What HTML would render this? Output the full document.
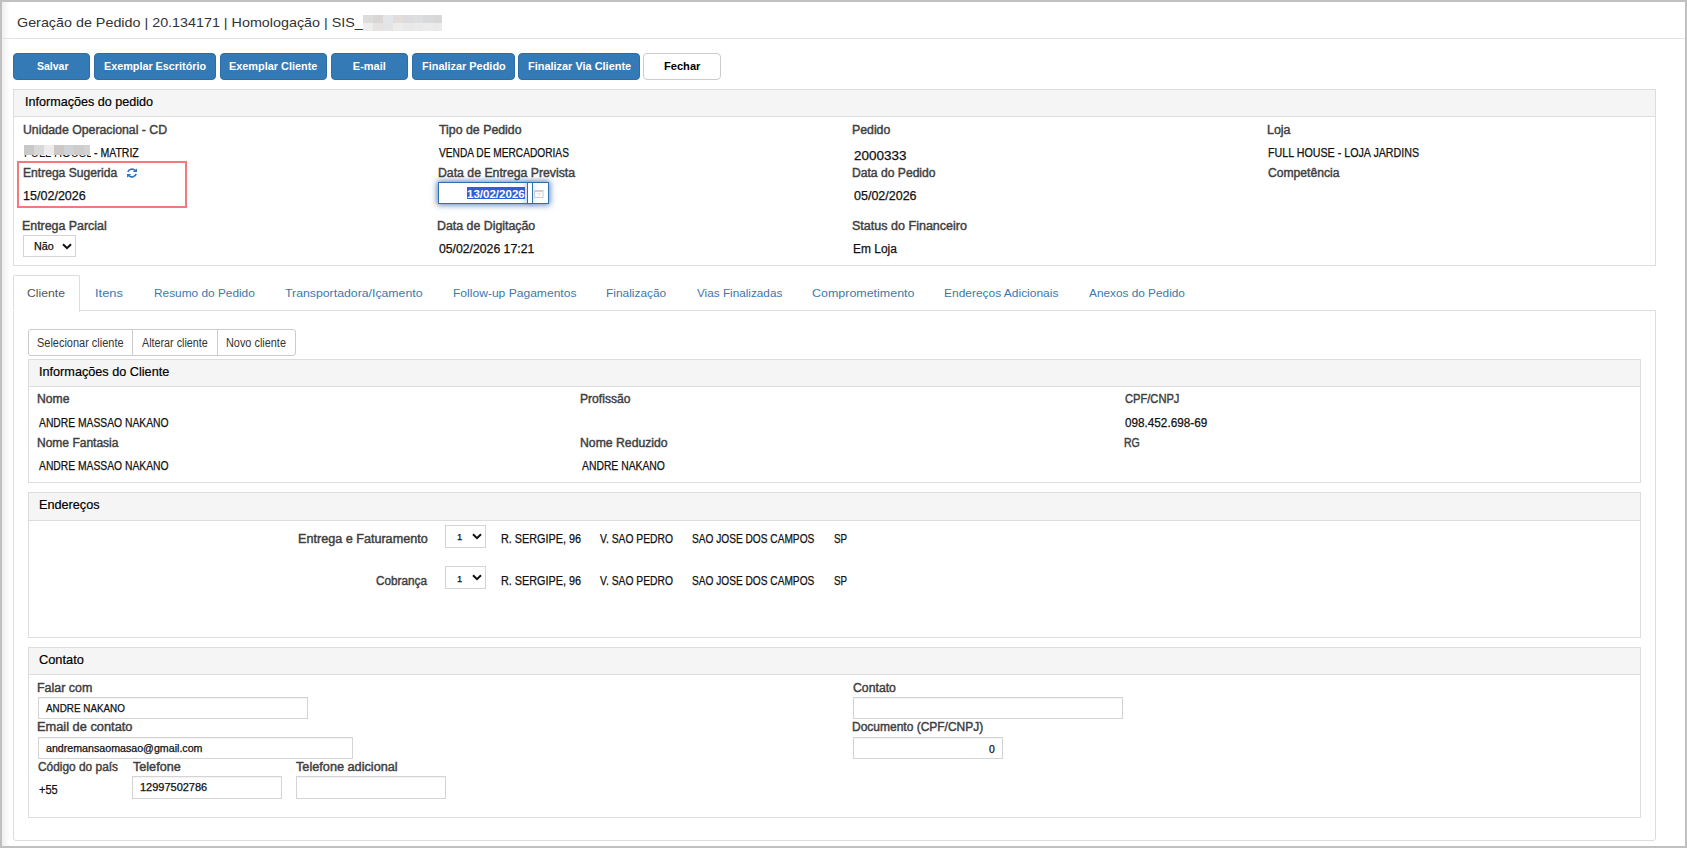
<!DOCTYPE html>
<html><head><meta charset="utf-8"><style>
html,body{margin:0;padding:0;}
body{width:1687px;height:848px;position:relative;overflow:hidden;background:#fff;font-family:"Liberation Sans",sans-serif;}
.frame{position:absolute;left:0;top:0;width:1683px;height:844px;border:2px solid #c0c0c0;}
.b{position:absolute;box-sizing:border-box;}
.t{position:absolute;white-space:nowrap;transform-origin:0 0;}
</style></head><body>
<div class="frame"></div>
<div class=b style='left:2px;top:2px;width:8px;height:844px;background:linear-gradient(to right,#f0f0f0,#f6f6f6 45%,#fff)'></div>
<div class=b style='left:2px;top:38px;width:1683px;height:1px;background:#e3e3e3'></div>
<div class=b style='left:13px;top:53px;width:77px;height:27px;background:#337ab7;border:1px solid #2e6da4;border-radius:4px'></div>
<div class=b style='left:94px;top:53px;width:122px;height:27px;background:#337ab7;border:1px solid #2e6da4;border-radius:4px'></div>
<div class=b style='left:220px;top:53px;width:107px;height:27px;background:#337ab7;border:1px solid #2e6da4;border-radius:4px'></div>
<div class=b style='left:331px;top:53px;width:77px;height:27px;background:#337ab7;border:1px solid #2e6da4;border-radius:4px'></div>
<div class=b style='left:412px;top:53px;width:103px;height:27px;background:#337ab7;border:1px solid #2e6da4;border-radius:4px'></div>
<div class=b style='left:518px;top:53px;width:122px;height:27px;background:#337ab7;border:1px solid #2e6da4;border-radius:4px'></div>
<div class=b style='left:643px;top:53px;width:78px;height:27px;background:#fff;border:1px solid #ccc;border-radius:4px'></div>
<div class=b style='left:13px;top:89px;width:1643px;height:177px;border:1px solid #ddd;background:#fff'></div>
<div class=b style='left:14px;top:90px;width:1641px;height:27px;background:#f5f5f5;border-bottom:1px solid #ddd'></div>
<div class=b style='left:17px;top:161px;width:170px;height:47px;border:2px solid #f27a7a'></div>
<div class=b style='left:24px;top:155px;width:67px;height:3px;overflow:hidden'><div class=t style='left:0;top:-8px;font:normal 12px/12px "Liberation Sans",sans-serif;color:#111;transform:scaleX(0.93)'>FULL HOUSE</div></div>
<div class=b style='left:24px;top:145px;width:10px;height:10px;background:#c8c8c8'></div>
<div class=b style='left:34px;top:145px;width:10px;height:10px;background:#d8d8d8'></div>
<div class=b style='left:44px;top:145px;width:10px;height:10px;background:#ececec'></div>
<div class=b style='left:54px;top:145px;width:10px;height:10px;background:#cdc8c5'></div>
<div class=b style='left:64px;top:145px;width:10px;height:10px;background:#d0d3d5'></div>
<div class=b style='left:74px;top:145px;width:10px;height:10px;background:#cdcdcd'></div>
<div class=b style='left:84px;top:145px;width:6px;height:10px;background:#d2d2d2'></div>
<div class=b style='left:363px;top:15px;width:10px;height:8px;background:#dcdcd9'></div>
<div class=b style='left:363px;top:23px;width:10px;height:8px;background:#eeeeee'></div>
<div class=b style='left:373px;top:15px;width:10px;height:8px;background:#d9d5d5'></div>
<div class=b style='left:373px;top:23px;width:10px;height:8px;background:#e6e2e2'></div>
<div class=b style='left:383px;top:15px;width:10px;height:8px;background:#e2e5ea'></div>
<div class=b style='left:383px;top:23px;width:10px;height:8px;background:#e4e4e6'></div>
<div class=b style='left:393px;top:15px;width:10px;height:8px;background:#e2ddd8'></div>
<div class=b style='left:393px;top:23px;width:10px;height:8px;background:#ececea'></div>
<div class=b style='left:403px;top:15px;width:10px;height:8px;background:#dcdcdf'></div>
<div class=b style='left:403px;top:23px;width:10px;height:8px;background:#e8e8ea'></div>
<div class=b style='left:413px;top:15px;width:10px;height:8px;background:#dcdee0'></div>
<div class=b style='left:413px;top:23px;width:10px;height:8px;background:#eaeaea'></div>
<div class=b style='left:423px;top:15px;width:10px;height:8px;background:#dadada'></div>
<div class=b style='left:423px;top:23px;width:10px;height:8px;background:#ececec'></div>
<div class=b style='left:433px;top:15px;width:9px;height:8px;background:#d8d8d8'></div>
<div class=b style='left:433px;top:23px;width:9px;height:8px;background:#eaeaea'></div>
<div class=b style='left:438px;top:182px;width:111px;height:22px;border:1px solid #3070b0;background:#fff;box-shadow:0 0 6px 1px rgba(20,80,150,.7)'></div>
<div class=b style='left:518px;top:183px;width:10px;height:20px;background:linear-gradient(to right,rgba(255,255,255,0),rgba(40,100,170,.12))'></div>
<div class=b style='left:527px;top:182px;width:1px;height:22px;background:#3070b0;box-shadow:0 0 4px rgba(20,80,150,.6)'></div>
<div class=b style='left:532px;top:182px;width:1px;height:22px;background:#3070b0;box-shadow:0 0 4px rgba(20,80,150,.5)'></div>
<div class=b style='left:528px;top:183px;width:4px;height:20px;background:#fff'></div>
<div class=b style='left:467px;top:187px;width:58px;height:12px;background:#2f5fd6'></div>
<div class=b style='left:23px;top:235px;width:53px;height:22px;border:1px solid #d4d4d4;background:#fff'></div>
<div class=b style='left:13px;top:310px;width:1643px;height:531px;border:1px solid #ddd;border-radius:0 0 3px 3px;background:#fff'></div>
<div class=b style='left:13px;top:275px;width:67px;height:37px;border:1px solid #ddd;border-bottom:none;border-radius:2px 2px 0 0;background:#fff'></div>
<div class=b style='left:28px;top:329px;width:268px;height:27px;border:1px solid #ccc;border-radius:3px;background:#fff'></div>
<div class=b style='left:132px;top:329px;width:1px;height:27px;background:#ccc'></div>
<div class=b style='left:217px;top:329px;width:1px;height:27px;background:#ccc'></div>
<div class=b style='left:28px;top:359px;width:1613px;height:124px;border:1px solid #ddd;background:#fff'></div>
<div class=b style='left:29px;top:360px;width:1611px;height:27px;background:#f5f5f5;border-bottom:1px solid #ddd'></div>
<div class=b style='left:28px;top:492px;width:1613px;height:146px;border:1px solid #ddd;background:#fff'></div>
<div class=b style='left:29px;top:493px;width:1611px;height:28px;background:#f5f5f5;border-bottom:1px solid #ddd'></div>
<div class=b style='left:28px;top:647px;width:1613px;height:171px;border:1px solid #ddd;background:#fff'></div>
<div class=b style='left:29px;top:648px;width:1611px;height:27px;background:#f5f5f5;border-bottom:1px solid #ddd'></div>
<div class=b style='left:445px;top:525px;width:41px;height:23px;border:1px solid #d4d4d4;background:#fff'></div>
<div class=b style='left:445px;top:566px;width:41px;height:23px;border:1px solid #d4d4d4;background:#fff'></div>
<div class=b style='left:38px;top:697px;width:270px;height:22px;border:1px solid #d4d4d4;background:#fff;box-shadow:inset 0 1px 1px rgba(0,0,0,.05)'></div>
<div class=b style='left:38px;top:737px;width:315px;height:22px;border:1px solid #d4d4d4;background:#fff;box-shadow:inset 0 1px 1px rgba(0,0,0,.05)'></div>
<div class=b style='left:132px;top:776px;width:150px;height:23px;border:1px solid #d4d4d4;background:#fff;box-shadow:inset 0 1px 1px rgba(0,0,0,.05)'></div>
<div class=b style='left:296px;top:776px;width:150px;height:23px;border:1px solid #d4d4d4;background:#fff;box-shadow:inset 0 1px 1px rgba(0,0,0,.05)'></div>
<div class=b style='left:853px;top:697px;width:270px;height:22px;border:1px solid #d4d4d4;background:#fff;box-shadow:inset 0 1px 1px rgba(0,0,0,.05)'></div>
<div class=b style='left:853px;top:737px;width:150px;height:22px;border:1px solid #d4d4d4;background:#fff;box-shadow:inset 0 1px 1px rgba(0,0,0,.05)'></div>
<div class=b style='left:13px;top:310px;width:1px;height:1px;background:#fff'></div>
<svg class=b style='left:62px;top:243px' width='10' height='7' viewBox='0 0 10 7'><path d='M1 1.2 L5 5.2 L9 1.2' stroke='#111' stroke-width='2' fill='none'/></svg><svg class=b style='left:472px;top:533px' width='10' height='7' viewBox='0 0 10 7'><path d='M1 1.2 L5 5.2 L9 1.2' stroke='#111' stroke-width='2' fill='none'/></svg><svg class=b style='left:472px;top:574px' width='10' height='7' viewBox='0 0 10 7'><path d='M1 1.2 L5 5.2 L9 1.2' stroke='#111' stroke-width='2' fill='none'/></svg><svg class=b style='left:127px;top:168px' width='10' height='10' viewBox='0 0 10 10'><g fill='#2f74c0'><path d='M0.9 4 C1.6 1.2 5.6 0 8.2 2.4' stroke='#2f74c0' stroke-width='1.7' fill='none'/><path d='M5.8 4.1 L10 4.1 L10 0.4 Z'/><path d='M9.1 6 C8.4 8.8 4.4 10 1.8 7.6' stroke='#2f74c0' stroke-width='1.7' fill='none'/><path d='M4.2 5.9 L0 5.9 L0 9.6 Z'/></g></svg><svg class=b style='left:534px;top:189px' width='10' height='9' viewBox='0 0 10 9'><rect x='0.5' y='1.5' width='8.5' height='7' fill='none' stroke='#cfcfcf' stroke-width='1'/><rect x='0.5' y='1' width='8.5' height='2' fill='#cfcfcf'/><path d='M3.5 4.5 H6 L4.5 7.5' stroke='#d4d4d4' stroke-width='0.8' fill='none'/></svg>
<div class=t style='left:16.90px;top:16px;font:normal 13px/13px "Liberation Sans", sans-serif;color:#333;transform:scaleX(1.1022);'>Geração de Pedido | 20.134171 | Homologação | SIS_</div>
<div class=t style='left:36.80px;top:61px;font:bold 11px/11px "Liberation Sans", sans-serif;color:#fff;transform:scaleX(0.9545);'>Salvar</div>
<div class=t style='left:103.92px;top:61px;font:bold 11px/11px "Liberation Sans", sans-serif;color:#fff;transform:scaleX(0.9816);'>Exemplar Escritório</div>
<div class=t style='left:229.21px;top:61px;font:bold 11px/11px "Liberation Sans", sans-serif;color:#fff;transform:scaleX(0.9898);'>Exemplar Cliente</div>
<div class=t style='left:352.80px;top:61px;font:bold 11px/11px "Liberation Sans", sans-serif;color:#fff;transform:scaleX(1.0000);'>E-mail</div>
<div class=t style='left:421.51px;top:61px;font:bold 11px/11px "Liberation Sans", sans-serif;color:#fff;transform:scaleX(0.9928);'>Finalizar Pedido</div>
<div class=t style='left:527.51px;top:61px;font:bold 11px/11px "Liberation Sans", sans-serif;color:#fff;transform:scaleX(0.9941);'>Finalizar Via Cliente</div>
<div class=t style='left:663.69px;top:61px;font:bold 11px/11px "Liberation Sans", sans-serif;color:#000;transform:scaleX(1.0086);'>Fechar</div>
<div class=t style='left:24.73px;top:95px;font:normal 13px/13px "Liberation Sans", sans-serif;color:#000;transform:scaleX(0.9679);-webkit-text-stroke:0.2px #000;'>Informações do pedido</div>
<div class=t style='left:22.58px;top:124px;font:normal 12px/12px "Liberation Sans", sans-serif;color:#404040;-webkit-text-stroke:0.42px #404040;transform:scaleX(1.0237);'>Unidade Operacional - CD</div>
<div class=t style='left:438.50px;top:124px;font:normal 12px/12px "Liberation Sans", sans-serif;color:#404040;-webkit-text-stroke:0.42px #404040;transform:scaleX(1.0287);'>Tipo de Pedido</div>
<div class=t style='left:852.08px;top:124px;font:normal 12px/12px "Liberation Sans", sans-serif;color:#404040;-webkit-text-stroke:0.42px #404040;transform:scaleX(1.0250);'>Pedido</div>
<div class=t style='left:1267.06px;top:124px;font:normal 12px/12px "Liberation Sans", sans-serif;color:#404040;-webkit-text-stroke:0.42px #404040;transform:scaleX(1.0364);'>Loja</div>
<div class=t style='left:94.00px;top:147px;font:normal 12px/12px "Liberation Sans", sans-serif;color:#111;-webkit-text-stroke:0.25px #111;transform:scaleX(0.8765);'>- MATRIZ</div>
<div class=t style='left:439.30px;top:147px;font:normal 12px/12px "Liberation Sans", sans-serif;color:#111;-webkit-text-stroke:0.25px #111;transform:scaleX(0.8471);'>VENDA DE MERCADORIAS</div>
<div class=t style='left:853.50px;top:149px;font:normal 13px/13px "Liberation Sans", sans-serif;color:#111;-webkit-text-stroke:0.25px #111;transform:scaleX(1.0360);'>2000333</div>
<div class=t style='left:1267.81px;top:147px;font:normal 12px/12px "Liberation Sans", sans-serif;color:#111;-webkit-text-stroke:0.25px #111;transform:scaleX(0.8911);'>FULL HOUSE - LOJA JARDINS</div>
<div class=t style='left:22.59px;top:167px;font:normal 12px/12px "Liberation Sans", sans-serif;color:#404040;-webkit-text-stroke:0.42px #404040;transform:scaleX(1.0075);'>Entrega Sugerida</div>
<div class=t style='left:437.68px;top:167px;font:normal 12px/12px "Liberation Sans", sans-serif;color:#404040;-webkit-text-stroke:0.42px #404040;transform:scaleX(1.0224);'>Data de Entrega Prevista</div>
<div class=t style='left:851.99px;top:167px;font:normal 12px/12px "Liberation Sans", sans-serif;color:#404040;-webkit-text-stroke:0.42px #404040;transform:scaleX(1.0098);'>Data do Pedido</div>
<div class=t style='left:1268.00px;top:167px;font:normal 12px/12px "Liberation Sans", sans-serif;color:#404040;-webkit-text-stroke:0.42px #404040;transform:scaleX(1.0099);'>Competência</div>
<div class=t style='left:23.45px;top:190px;font:normal 12px/12px "Liberation Sans", sans-serif;color:#111;-webkit-text-stroke:0.25px #111;transform:scaleX(1.0458);'>15/02/2026</div>
<div class=t style='left:853.50px;top:190px;font:normal 12px/12px "Liberation Sans", sans-serif;color:#111;-webkit-text-stroke:0.25px #111;transform:scaleX(1.0417);'>05/02/2026</div>
<div class=t style='left:466.85px;top:189.5px;font:bold 10px/10px "Liberation Sans", sans-serif;color:#fff;transform:scaleX(1.1531);'>13/02/2026</div>
<div class=t style='left:22.37px;top:220px;font:normal 12px/12px "Liberation Sans", sans-serif;color:#404040;-webkit-text-stroke:0.42px #404040;transform:scaleX(1.0321);'>Entrega Parcial</div>
<div class=t style='left:437.47px;top:220px;font:normal 12px/12px "Liberation Sans", sans-serif;color:#404040;-webkit-text-stroke:0.42px #404040;transform:scaleX(1.0298);'>Data de Digitação</div>
<div class=t style='left:851.96px;top:220px;font:normal 12px/12px "Liberation Sans", sans-serif;color:#404040;-webkit-text-stroke:0.42px #404040;transform:scaleX(1.0450);'>Status do Financeiro</div>
<div class=t style='left:438.80px;top:243px;font:normal 12px/12px "Liberation Sans", sans-serif;color:#111;-webkit-text-stroke:0.25px #111;transform:scaleX(1.0194);'>05/02/2026 17:21</div>
<div class=t style='left:852.50px;top:243px;font:normal 12px/12px "Liberation Sans", sans-serif;color:#111;-webkit-text-stroke:0.25px #111;transform:scaleX(0.9953);'>Em Loja</div>
<div class=t style='left:33.52px;top:242px;font:normal 10px/10px "Liberation Sans", sans-serif;color:#111;-webkit-text-stroke:0.25px #111;transform:scaleX(1.0765);'>Não</div>
<div class=t style='left:27.09px;top:288px;font:normal 11px/11px "Liberation Sans", sans-serif;color:#555;transform:scaleX(1.1091);'>Cliente</div>
<div class=t style='left:95.13px;top:288px;font:normal 11px/11px "Liberation Sans", sans-serif;color:#3a78b5;transform:scaleX(1.1696);'>Itens</div>
<div class=t style='left:153.82px;top:288px;font:normal 11px/11px "Liberation Sans", sans-serif;color:#3a78b5;transform:scaleX(1.0772);'>Resumo do Pedido</div>
<div class=t style='left:285.00px;top:288px;font:normal 11px/11px "Liberation Sans", sans-serif;color:#3a78b5;transform:scaleX(1.1171);'>Transportadora/Içamento</div>
<div class=t style='left:452.60px;top:288px;font:normal 11px/11px "Liberation Sans", sans-serif;color:#3a78b5;transform:scaleX(1.0973);'>Follow-up Pagamentos</div>
<div class=t style='left:605.52px;top:288px;font:normal 11px/11px "Liberation Sans", sans-serif;color:#3a78b5;transform:scaleX(1.0815);'>Finalização</div>
<div class=t style='left:696.70px;top:288px;font:normal 11px/11px "Liberation Sans", sans-serif;color:#3a78b5;transform:scaleX(1.0675);'>Vias Finalizadas</div>
<div class=t style='left:811.77px;top:288px;font:normal 11px/11px "Liberation Sans", sans-serif;color:#3a78b5;transform:scaleX(1.1326);'>Comprometimento</div>
<div class=t style='left:943.81px;top:288px;font:normal 11px/11px "Liberation Sans", sans-serif;color:#3a78b5;transform:scaleX(1.0875);'>Endereços Adicionais</div>
<div class=t style='left:1088.80px;top:288px;font:normal 11px/11px "Liberation Sans", sans-serif;color:#3a78b5;transform:scaleX(1.0742);'>Anexos do Pedido</div>
<div class=t style='left:36.89px;top:336.5px;font:normal 12px/12px "Liberation Sans", sans-serif;color:#333;transform:scaleX(0.9140);'>Selecionar cliente</div>
<div class=t style='left:142.20px;top:336.5px;font:normal 12px/12px "Liberation Sans", sans-serif;color:#333;transform:scaleX(0.8959);'>Alterar cliente</div>
<div class=t style='left:226.29px;top:336.5px;font:normal 12px/12px "Liberation Sans", sans-serif;color:#333;transform:scaleX(0.9077);'>Novo cliente</div>
<div class=t style='left:38.93px;top:365px;font:normal 13px/13px "Liberation Sans", sans-serif;color:#000;transform:scaleX(0.9742);-webkit-text-stroke:0.2px #000;'>Informações do Cliente</div>
<div class=t style='left:36.98px;top:393px;font:normal 12px/12px "Liberation Sans", sans-serif;color:#404040;-webkit-text-stroke:0.42px #404040;transform:scaleX(1.0161);'>Nome</div>
<div class=t style='left:580.49px;top:393px;font:normal 12px/12px "Liberation Sans", sans-serif;color:#404040;-webkit-text-stroke:0.42px #404040;transform:scaleX(1.0102);'>Profissão</div>
<div class=t style='left:1124.70px;top:393px;font:normal 12px/12px "Liberation Sans", sans-serif;color:#404040;-webkit-text-stroke:0.42px #404040;transform:scaleX(0.9276);'>CPF/CNPJ</div>
<div class=t style='left:39.00px;top:417px;font:normal 12px/12px "Liberation Sans", sans-serif;color:#111;-webkit-text-stroke:0.25px #111;transform:scaleX(0.8600);'>ANDRE MASSAO NAKANO</div>
<div class=t style='left:1125.00px;top:417px;font:normal 12px/12px "Liberation Sans", sans-serif;color:#111;-webkit-text-stroke:0.25px #111;transform:scaleX(0.9774);'>098.452.698-69</div>
<div class=t style='left:37.00px;top:437px;font:normal 12px/12px "Liberation Sans", sans-serif;color:#404040;-webkit-text-stroke:0.42px #404040;transform:scaleX(1.0012);'>Nome Fantasia</div>
<div class=t style='left:580.48px;top:437px;font:normal 12px/12px "Liberation Sans", sans-serif;color:#404040;-webkit-text-stroke:0.42px #404040;transform:scaleX(1.0188);'>Nome Reduzido</div>
<div class=t style='left:1123.82px;top:437px;font:normal 12px/12px "Liberation Sans", sans-serif;color:#404040;-webkit-text-stroke:0.42px #404040;transform:scaleX(0.8765);'>RG</div>
<div class=t style='left:39.00px;top:460px;font:normal 12px/12px "Liberation Sans", sans-serif;color:#111;-webkit-text-stroke:0.25px #111;transform:scaleX(0.8600);'>ANDRE MASSAO NAKANO</div>
<div class=t style='left:582.10px;top:460px;font:normal 12px/12px "Liberation Sans", sans-serif;color:#111;-webkit-text-stroke:0.25px #111;transform:scaleX(0.8635);'>ANDRE NAKANO</div>
<div class=t style='left:38.93px;top:498px;font:normal 13px/13px "Liberation Sans", sans-serif;color:#000;transform:scaleX(0.9738);-webkit-text-stroke:0.2px #000;'>Endereços</div>
<div class=t style='left:297.65px;top:533px;font:normal 12px/12px "Liberation Sans", sans-serif;color:#404040;-webkit-text-stroke:0.42px #404040;transform:scaleX(1.0508);'>Entrega e Faturamento</div>
<div class=t style='left:500.50px;top:533px;font:normal 12px/12px "Liberation Sans", sans-serif;color:#111;-webkit-text-stroke:0.25px #111;transform:scaleX(0.9023);'>R. SERGIPE, 96</div>
<div class=t style='left:599.70px;top:533px;font:normal 12px/12px "Liberation Sans", sans-serif;color:#111;-webkit-text-stroke:0.25px #111;transform:scaleX(0.8588);'>V. SAO PEDRO</div>
<div class=t style='left:692.05px;top:533px;font:normal 12px/12px "Liberation Sans", sans-serif;color:#111;-webkit-text-stroke:0.25px #111;transform:scaleX(0.8451);'>SAO JOSE DOS CAMPOS</div>
<div class=t style='left:833.98px;top:533px;font:normal 12px/12px "Liberation Sans", sans-serif;color:#111;-webkit-text-stroke:0.25px #111;transform:scaleX(0.8200);'>SP</div>
<div class=t style='left:456.55px;top:533px;font:normal 9px/9px "Liberation Sans", sans-serif;color:#111;-webkit-text-stroke:0.25px #111;transform:scaleX(1.0500);'>1</div>
<div class=t style='left:375.90px;top:575px;font:normal 12px/12px "Liberation Sans", sans-serif;color:#404040;-webkit-text-stroke:0.42px #404040;transform:scaleX(0.9808);'>Cobrança</div>
<div class=t style='left:500.50px;top:575px;font:normal 12px/12px "Liberation Sans", sans-serif;color:#111;-webkit-text-stroke:0.25px #111;transform:scaleX(0.9023);'>R. SERGIPE, 96</div>
<div class=t style='left:599.70px;top:575px;font:normal 12px/12px "Liberation Sans", sans-serif;color:#111;-webkit-text-stroke:0.25px #111;transform:scaleX(0.8588);'>V. SAO PEDRO</div>
<div class=t style='left:692.05px;top:575px;font:normal 12px/12px "Liberation Sans", sans-serif;color:#111;-webkit-text-stroke:0.25px #111;transform:scaleX(0.8451);'>SAO JOSE DOS CAMPOS</div>
<div class=t style='left:833.98px;top:575px;font:normal 12px/12px "Liberation Sans", sans-serif;color:#111;-webkit-text-stroke:0.25px #111;transform:scaleX(0.8200);'>SP</div>
<div class=t style='left:456.55px;top:575px;font:normal 9px/9px "Liberation Sans", sans-serif;color:#111;-webkit-text-stroke:0.25px #111;transform:scaleX(1.0500);'>1</div>
<div class=t style='left:38.92px;top:653px;font:normal 13px/13px "Liberation Sans", sans-serif;color:#000;transform:scaleX(0.9841);-webkit-text-stroke:0.2px #000;'>Contato</div>
<div class=t style='left:36.96px;top:682px;font:normal 12px/12px "Liberation Sans", sans-serif;color:#404040;-webkit-text-stroke:0.42px #404040;transform:scaleX(1.0385);'>Falar com</div>
<div class=t style='left:853.30px;top:682px;font:normal 12px/12px "Liberation Sans", sans-serif;color:#404040;-webkit-text-stroke:0.42px #404040;transform:scaleX(1.0214);'>Contato</div>
<div class=t style='left:46.10px;top:704px;font:normal 10px/10px "Liberation Sans", sans-serif;color:#111;-webkit-text-stroke:0.25px #111;transform:scaleX(0.9863);'>ANDRE NAKANO</div>
<div class=t style='left:36.93px;top:721px;font:normal 12px/12px "Liberation Sans", sans-serif;color:#404040;-webkit-text-stroke:0.42px #404040;transform:scaleX(1.0682);'>Email de contato</div>
<div class=t style='left:852.00px;top:721px;font:normal 12px/12px "Liberation Sans", sans-serif;color:#404040;-webkit-text-stroke:0.42px #404040;transform:scaleX(0.9992);'>Documento (CPF/CNPJ)</div>
<div class=t style='left:46.10px;top:744px;font:normal 10px/10px "Liberation Sans", sans-serif;color:#111;-webkit-text-stroke:0.25px #111;transform:scaleX(1.0653);'>andremansaomasao@gmail.com</div>
<div class=t style='left:989.00px;top:744.5px;font:normal 10px/10px "Liberation Sans", sans-serif;color:#111;-webkit-text-stroke:0.25px #111;transform:scaleX(1.0400);'>0</div>
<div class=t style='left:38.00px;top:761px;font:normal 12px/12px "Liberation Sans", sans-serif;color:#404040;-webkit-text-stroke:0.42px #404040;transform:scaleX(0.9914);'>Código do país</div>
<div class=t style='left:132.70px;top:761px;font:normal 12px/12px "Liberation Sans", sans-serif;color:#404040;-webkit-text-stroke:0.42px #404040;transform:scaleX(1.0511);'>Telefone</div>
<div class=t style='left:296.10px;top:761px;font:normal 12px/12px "Liberation Sans", sans-serif;color:#404040;-webkit-text-stroke:0.42px #404040;transform:scaleX(1.0583);'>Telefone adicional</div>
<div class=t style='left:38.70px;top:784px;font:normal 12px/12px "Liberation Sans", sans-serif;color:#111;-webkit-text-stroke:0.25px #111;transform:scaleX(0.9200);'>+55</div>
<div class=t style='left:139.70px;top:783px;font:normal 10px/10px "Liberation Sans", sans-serif;color:#111;-webkit-text-stroke:0.25px #111;transform:scaleX(1.0983);'>12997502786</div>

</body></html>
